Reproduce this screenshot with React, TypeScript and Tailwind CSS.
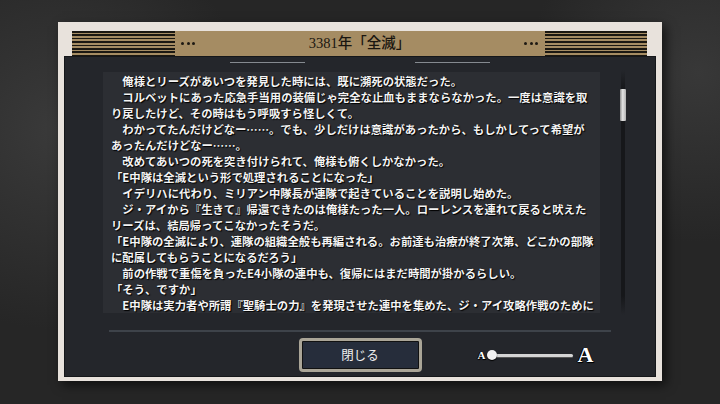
import type { ReactNode } from "react";

const lines = [
  "　俺様とリーズがあいつを発見した時には、既に瀕死の状態だった。",
  "　コルベットにあった応急手当用の装備じゃ完全な止血もままならなかった。一度は意識を取",
  "り戻したけど、その時はもう呼吸すら怪しくて。",
  "　わかってたんだけどなー……。でも、少しだけは意識があったから、もしかしてって希望が",
  "あったんだけどなー……。",
  "　改めてあいつの死を突き付けられて、俺様も俯くしかなかった。",
  "「E中隊は全滅という形で処理されることになった」",
  "　イデリハに代わり、ミリアン中隊長が連隊で起きていることを説明し始めた。",
  "　ジ・アイから『生きて』帰還できたのは俺様たった一人。ローレンスを連れて戻ると吠えた",
  "リーズは、結局帰ってこなかったそうだ。",
  "「E中隊の全滅により、連隊の組織全般も再編される。お前達も治療が終了次第、どこかの部隊",
  "に配属してもらうことになるだろう」",
  "　前の作戦で重傷を負ったE4小隊の連中も、復帰にはまだ時間が掛かるらしい。",
  "「そう、ですか」",
  "　E中隊は実力者や所謂『聖騎士の力』を発現させた連中を集めた、ジ・アイ攻略作戦のために",
];

function Stripes({ className }: { className: string }) {
  return (
    <div
      className={`h-full bg-[repeating-linear-gradient(to_bottom,#1b1812_0px,#1b1812_1.6px,#a58c63_1.6px,#a58c63_3.4px)] ${className}`}
    />
  );
}

function Dots() {
  return (
    <div className="flex items-center gap-[2.5px]">
      <span className="h-[3px] w-[3px] rounded-full bg-[#1c1812]" />
      <span className="h-[3px] w-[3px] rounded-full bg-[#1c1812]" />
      <span className="h-[3px] w-[3px] rounded-full bg-[#1c1812]" />
    </div>
  );
}

function Outlined({ children, className }: { children: ReactNode; className: string }) {
  return (
    <span
      className={`font-['Liberation_Serif','Noto_Sans_CJK_JP',serif] font-bold text-white [text-shadow:1px_1px_0_#000,-1px_0_0_#000,0_1px_1px_#000] ${className}`}
    >
      {children}
    </span>
  );
}

export default function App() {
  return (
    <div className="flex h-[404px] w-[720px] items-start justify-center overflow-hidden bg-[#262626] bg-[radial-gradient(circle_at_8%_32%,#3a3a3a_0%,transparent_28%),radial-gradient(circle_at_97%_18%,#383838_0%,transparent_22%)] pt-[22px]">
      <div className="flex w-[604px] flex-col bg-[#e8e2dc] pb-[4px] pt-[9px] shadow-[4px_4px_10px_rgba(0,0,0,0.6)]">
        {/* title bar */}
        <div className="ml-[14px] mr-[15px] flex h-[25px] items-center bg-[#a58c63]">
          <Stripes className="w-[103px]" />
          <div className="ml-[6px]">
            <Dots />
          </div>
          <div className="flex-1 text-center font-['Liberation_Serif','Noto_Sans_CJK_JP',serif] text-[14.5px] font-medium leading-none text-[#1a1610]">
            3381年「全滅」
          </div>
          <div className="mr-[7px]">
            <Dots />
          </div>
          <Stripes className="w-[102px]" />
        </div>

        {/* body */}
        <div className="mx-[6px] flex h-[321px] flex-col border border-[#15171a] bg-[#24262b]">
          <div className="mt-[5px] flex justify-center gap-[110px]">
            <div className="h-px w-[75px] bg-[#858a90]" />
            <div className="h-px w-[75px] bg-[#858a90]" />
          </div>

          <div className="mt-[9px] flex h-[241px] items-center">
            <div className="ml-[38px] h-[241px] w-[497px] overflow-hidden bg-[#2c2e33] pl-[8px] pt-[1px]">
              {lines.map((line, i) => (
                <div
                  key={i}
                  className="whitespace-nowrap font-['Noto_Sans_CJK_JP',sans-serif] text-[11.35px] font-bold leading-[16px] text-[#f4f4f4] [text-shadow:1px_1px_1px_#000,0_0_1px_#000]"
                >
                  {line}
                </div>
              ))}
            </div>
            <div className="ml-[20px] flex h-[245px] w-[6px] flex-col items-center bg-[linear-gradient(to_bottom,transparent,#16171a_8%,#16171a_92%,transparent)] bg-[length:4px_100%] bg-center bg-no-repeat">
              <div className="mt-[19px] h-[32px] w-[6px] rounded-[1px] bg-[linear-gradient(to_right,#8d8d8d,#e4e4e4_45%,#b0b0b0)]" />
            </div>
          </div>

          <div className="ml-[44px] mt-[17px] h-[2px] w-[502px] bg-[#3e434a]" />

          <div className="mt-[6px] grid h-[34px] grid-cols-[1fr_auto_1fr] items-center">
            <div />
            <button className="flex h-[34px] w-[123px] items-center justify-center rounded-[4px] border-[3px] border-[#aaa597] bg-[#262d3b] shadow-[inset_0_0_0_1px_#111] font-['Noto_Sans_CJK_JP',sans-serif] text-[12.5px] text-[#f0f0f0]">
              閉じる
            </button>
            <div className="flex items-center pl-[56px]">
              <Outlined className="text-[11px] leading-none">A</Outlined>
              <div className="relative ml-[2px] flex h-[10px] w-[86px] items-center">
                <div className="h-[3px] w-full rounded-full bg-[#d4d4d4] shadow-[0_1px_0_#555]" />
                <div className="absolute left-0 h-[10px] w-[10px] rounded-full bg-[#f2f2f2] shadow-[0_1px_1px_#000]" />
              </div>
              <Outlined className="ml-[4px] text-[22px] leading-none">A</Outlined>
            </div>
          </div>
        </div>
      </div>
    </div>
  );
}
